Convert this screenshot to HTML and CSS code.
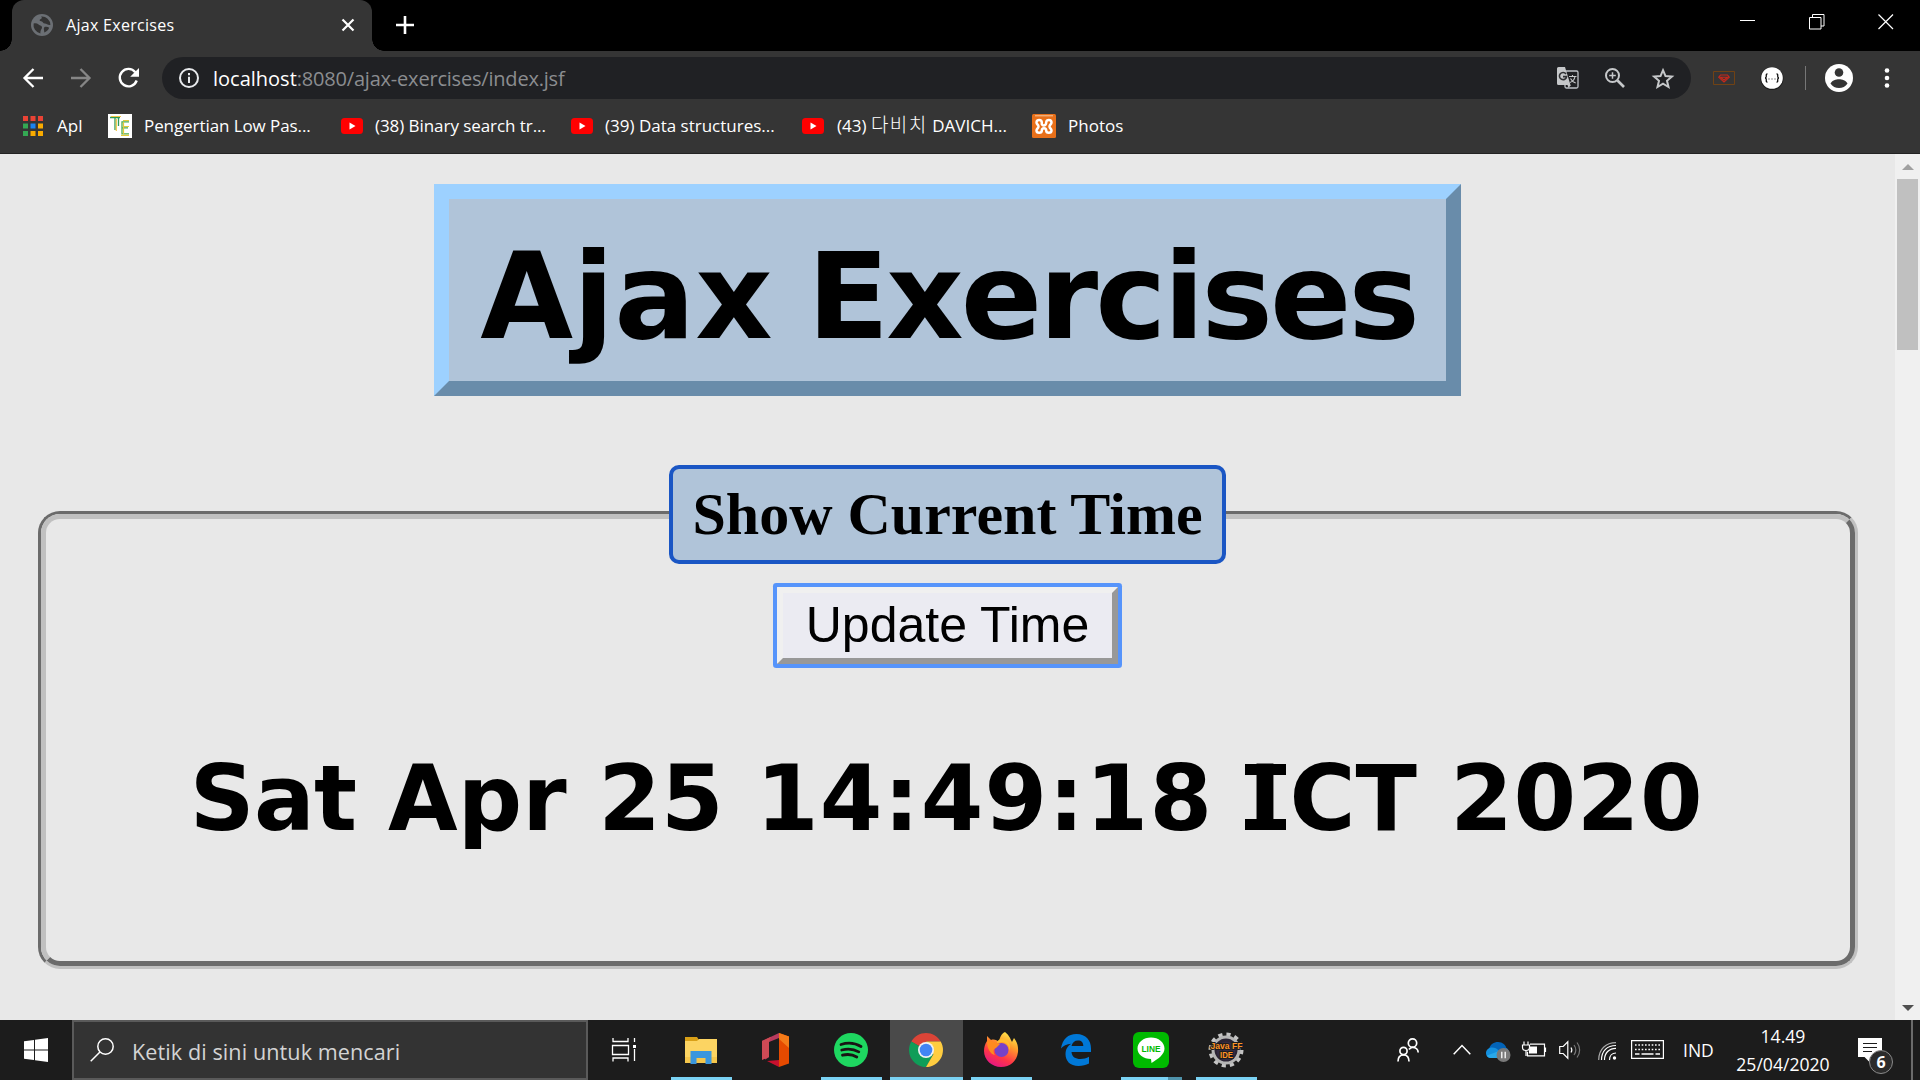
FILE: index.html
```html
<!DOCTYPE html>
<html lang="id">
<head>
<meta charset="utf-8">
<title>Ajax Exercises</title>
<link rel="stylesheet" href="styles.css">
</head>
<body>
<div class="tabstrip">
  <div class="tab">
    <svg class="favicon" viewBox="0 0 22 22"><circle cx="11" cy="11" r="11" fill="#6b6f74"/><path d="M2.600 9.500c2-.5 3.500-.3 5 1 1.500 1.300 3.600 1 3.400 3.200-.2 1.700-1.700 2-1.600 5.700A8.600 8.600 0 0 1 2.600 9.500zM10 2.500c1.500 1 .8 2.200-.6 2.700-1.400.6-.8 2 .8 2.100 2 .2 1.600 2.200 3.600 2.300 2.200.2 2.600 1.700 5.600 1.400A8.500 8.500 0 0 0 10 2.500zM13.500 13c1.600-.6 3.500-.2 4.700.7-1 2.400-2.800 4-5 4.800.4-2-1.300-3.800.3-5.500z" fill="#333"/></svg>
    <span class="tab-title">Ajax Exercises</span>
    <svg class="tab-close" viewBox="0 0 12 12"><path d="M.5.5l11 11M11.500.5l-11 11" stroke="#fff" stroke-width="2.200"/></svg>
  </div>
  <svg class="new-tab" viewBox="0 0 18 18"><path d="M9 0v18M0 9h18" stroke="#fff" stroke-width="2.600"/></svg>
  <div class="win-controls">
    <svg viewBox="0 0 16 16"><path d="M0 6.500h15" stroke="#fff"/></svg>
    <svg viewBox="0 0 16 16"><path d="M.5 3.500h11.500v11.500H.500zM3.500 3.500v-3h11.500v11.500h-3" fill="none" stroke="#fff"/></svg>
    <svg viewBox="0 0 16 16"><path d="M.5.5l14.500 14.500M15 .5L.5 15" stroke="#fff" stroke-width="1.200"/></svg>
  </div>
</div>

<div class="toolbar">
  <svg class="nav back" viewBox="0 0 20 20"><path d="M20 10H2M10.500 1L1.500 10l9 9" fill="none" stroke="#fff" stroke-width="2.300"/></svg>
  <svg class="nav fwd" viewBox="0 0 20 20"><path d="M0 10h18M9.500 1l9 9-9 9" fill="none" stroke="#868686" stroke-width="2.300"/></svg>
  <svg class="nav reload" viewBox="0 0 22 20"><path d="M17.300 4.200A8.700 8.700 0 1 0 18.700 12.500" fill="none" stroke="#fff" stroke-width="2.400"/><path d="M21 0v8.800h-8.800z" fill="#fff"/></svg>
  <div class="omnibox">
    <svg class="info" viewBox="0 0 20 20"><circle cx="10" cy="10" r="9" fill="none" stroke="#e8eaed" stroke-width="2"/><path d="M9 8.800h2V15H9zM9 5h2v2.200H9z" fill="#e8eaed"/></svg>
    <div class="url"><span class="host">localhost</span>:8080/ajax-exercises/index.jsf</div>
    <svg class="translate" viewBox="0 0 22 22"><rect x="8" y="4" width="13" height="17" rx="1.500" fill="none" stroke="#bdc1c6" stroke-width="1.300"/><path d="M1.500 0H8l5.500 18H1.500A1.500 1.500 0 0 1 0 16.500v-15A1.500 1.500 0 0 1 1.500 0z" fill="#c6c8ca"/><path d="M10.500 18H14l-2.500 3z" fill="#c6c8ca"/><path d="M9 7A3.600 3.600 0 1 0 9.600 9.600H6" fill="none" stroke="#303134" stroke-width="1.600"/><path d="M12 9.500h7.500M15.500 8v1.500M18 9.500c-.5 3-2.500 5-5 6M13.500 11.500c1 2 2.800 3.800 5.200 4.600" fill="none" stroke="#c6c8ca" stroke-width="1.100"/></svg>
    <svg class="zoom" viewBox="0 0 20 20"><circle cx="7.500" cy="7.500" r="6.500" fill="none" stroke="#c6c8ca" stroke-width="2"/><path d="M12.500 12.500l6.500 6.500" stroke="#c6c8ca" stroke-width="2.600"/><path d="M7.500 4.200v6.600M4.200 7.500h6.600" stroke="#c6c8ca" stroke-width="1.500"/></svg>
    <svg class="star" viewBox="0 0 22 21"><path d="M11 2.200l2.500 5.900 6.400.5-4.900 4.200 1.500 6.200-5.500-3.300L5.500 19 7 12.800 2.100 8.600l6.400-.5z" fill="none" stroke="#c6c8ca" stroke-width="2"/></svg>
  </div>
  <svg class="ext-mail" viewBox="0 0 22 14"><path d="M.5.5h21v13H.500z" fill="none" stroke="#704214"/><path d="M7.500 4h7l1.800 2.300L11 11 5.700 6.300zM7.500 6.200h7L11 9z" fill="none" stroke="#c5281c" stroke-width="1.100"/></svg>
  <svg class="ext-json" viewBox="0 0 24 24"><circle cx="12" cy="12.500" r="11.500" fill="#1c1c1c"/><circle cx="12" cy="12" r="10.800" fill="#fff"/><path d="M7.500 7.800c-1.600 0-1.200 1.500-1.200 2.500S5.900 12 5 12c.9 0 1.300.700 1.300 1.700s-.4 2.500 1.200 2.500M16.500 7.800c1.600 0 1.200 1.500 1.200 2.500s.4 1.700 1.300 1.700c-.9 0-1.300.700-1.300 1.700s.4 2.500-1.200 2.500" fill="none" stroke="#111" stroke-width="1.300"/><path d="M8.500 13h1M11.500 13h1M14.500 13h1" stroke="#222" stroke-width="1.200"/></svg>
  <div class="tool-sep"></div>
  <svg class="avatar" viewBox="0 0 28 28"><circle cx="14" cy="14" r="14" fill="#fff"/><circle cx="14" cy="8.500" r="4.300" fill="#353535"/><path d="M5.500 19.500C7 16.500 11 15.200 14 15.200s7 1.300 8.500 4.300c-2 3-5 4.500-8.500 4.500s-6.500-1.500-8.500-4.500z" fill="#353535"/></svg>
  <svg class="menu" viewBox="0 0 6 20"><circle cx="3" cy="2.500" r="2.300" fill="#fff"/><circle cx="3" cy="10" r="2.300" fill="#fff"/><circle cx="3" cy="17.500" r="2.300" fill="#fff"/></svg>
</div>

<div class="bookmarks">
  <div class="bm apps"><svg class="i20" viewBox="0 0 20 20"><path d="M0 0h5v5H0zM7.500 0h5v5h-5zM15 0h5v5h-5z" fill="#ea4335"/><path d="M0 7.500h5v5H0zM0 15h5v5H0z" fill="#34a853"/><path d="M7.500 7.500h5v5h-5z" fill="#1a83f0"/><path d="M15 7.500h5v5h-5zM7.500 15h5v5h-5zM15 15h5v5h-5z" fill="#f9ab00"/></svg><span class="t1">Apl</span></div>
  <div class="bm te"><svg class="i24" viewBox="0 0 24 24"><path d="M0 0h24v24H0z" fill="#fff"/><path d="M2 3.500h10M7 3v13M10.500 4v8" fill="none" stroke="#2f9a58" stroke-width="1.300"/><path d="M3 2.500h10M8.300 5v12" fill="none" stroke="#f2c744" stroke-width="1.200"/><path d="M21 7.800h-7v12h7M14 13.800h6" fill="none" stroke="#4bab50" stroke-width="1.300"/><path d="M21 6.500h-6M21 12.500h-5M21 21.300h-8M15.500 8v12" fill="none" stroke="#e3c93a" stroke-width="1.200"/></svg><span class="t2">Pengertian Low Pas...</span></div>
  <div class="bm yt1"><svg class="yt" viewBox="0 0 22 16"><rect width="22" height="16" rx="3.500" fill="#f00"/><path d="M8.500 4.500v7l6-3.500z" fill="#fff"/></svg><span class="t3">(38) Binary search tr...</span></div>
  <div class="bm yt2"><svg class="yt" viewBox="0 0 22 16"><rect width="22" height="16" rx="3.500" fill="#f00"/><path d="M8.500 4.500v7l6-3.500z" fill="#fff"/></svg><span class="t4">(39) Data structures...</span></div>
  <div class="bm yt3"><svg class="yt" viewBox="0 0 22 16"><rect width="22" height="16" rx="3.500" fill="#f00"/><path d="M8.500 4.500v7l6-3.500z" fill="#fff"/></svg><span class="t5">(43) <span class="hangul">다비치</span> DAVICH...</span></div>
  <div class="bm ph"><svg class="i24" viewBox="0 0 24 24"><rect width="24" height="24" rx="1.500" fill="#e8701a"/><path d="M3 1.800h18" stroke="#f7c9a0"/><path d="M9.800 10.500v-2c0-3.500-5.300-3.500-5.300 0 0 2 2 2 2 4s-2 2-2 4c0 3 5.300 3 5.300 0s4.400-3 4.400 0 5.300 3 5.300 0c0-2-2-2-2-4s2-2 2-4c0-3.500-5.300-3.500-5.300 0s-4.400 4-4.400 1" fill="none" stroke="#fff" stroke-width="2.500"/></svg><span class="t6">Photos</span></div>
</div>

<div class="viewport">
  <main class="page">
    <h1 class="title">Ajax <span class="exercises">Exercises</span></h1>
    <section class="frame">
      <div class="frame-inner">
        <h2 class="legend">Show Current Time</h2>
        <button class="update" type="button">Update Time</button>
        <div class="time"><span class="day">Sat</span> <span class="month">Apr</span> <span class="date-num">25</span> <span class="hms">14:49:18</span> <span class="slab">I</span>CT <span class="year">2020</span></div>
      </div>
    </section>
  </main>
  <div class="scrollbar">
    <svg class="up" viewBox="0 0 12 6"><path d="M6 0l6 6H0z" fill="#a0a0a0"/></svg>
    <div class="thumb"></div>
    <svg class="down" viewBox="0 0 12 6"><path d="M6 6l6-6H0z" fill="#505050"/></svg>
  </div>
</div>

<div class="taskbar">
  <div class="start"><svg viewBox="0 0 24 24"><path d="M0 3.300l10-1.400v9.600H0zM11 1.700L24 0v11.500H11zM0 12.500h10v9.600L0 20.700zM11 12.500h13V24l-13-1.700z" fill="#fff"/></svg></div>
  <div class="search"><svg viewBox="0 0 24 24"><circle cx="15.500" cy="8.500" r="7.700" fill="none" stroke="#fff" stroke-width="1.500"/><path d="M10 14L.7 23.300" stroke="#fff" stroke-width="1.500"/></svg><span>Ketik di sini untuk mencari</span></div>
  <div class="view"><svg viewBox="0 0 24 24"><path d="M1 0v3.500h15V0M.5 7.500h16v9H.500zM1 23.500V20h15v3.500M22.500 0v4M22.500 11v12" fill="none" stroke="#fff" stroke-width="1.300"/><path d="M21 7h3v3h-3z" fill="#fff"/></svg></div>
  <div class="apps-row">
    <div class="app run"><svg viewBox="0 0 36 36"><path d="M2 5h12l2 3v5H2z" fill="#d9a017"/><path d="M2 9h12l2-2h18v24H2z" fill="#fcd462"/><path d="M2 25h32v6H2z" fill="#f5c64b"/><path d="M7.500 19h21v13h-6v-6h-9v6h-6z" fill="#3a96dd"/></svg></div>
    <div class="app"><svg viewBox="0 0 36 36"><path d="M4 9L21 1v5l-10 4v15l-3.500 2.500L4 24z" fill="#b83a5e"/><path d="M4 9l9-4.300L11 10v15l-7 3z" fill="#cf4a55"/><path d="M21 1l10 3.500v27L21 35z" fill="#e64a00"/><path d="M21 1l10 3.500V16l-10-9z" fill="#f47a18"/><path d="M9 29l12-1v7z" fill="#c8102e"/></svg></div>
    <div class="app run"><svg viewBox="0 0 36 36"><circle cx="18" cy="18" r="17" fill="#1ed760"/><path d="M8 12.500c7-2.200 14.500-1.300 20 2M8.800 18c6-1.700 12-1 17 1.900M9.500 23.200c5-1.300 10-.8 14.300 1.800" fill="none" stroke="#191414" stroke-width="2.800" stroke-linecap="round"/></svg></div>
    <div class="app run active"><svg viewBox="0 0 36 36"><path d="M18 18L3.300 9.500A17 17 0 0 1 32.700 9.500H18z" fill="#db4437"/><path d="M18 18L3.300 9.500A17 17 0 0 0 18 35l7.400-12.800z" fill="#0f9d58"/><path d="M18 9.500h14.700A17 17 0 0 1 18 35l7.400-12.800z" fill="#ffcd40"/><circle cx="18" cy="18" r="8" fill="#f1f1f1"/><circle cx="18" cy="18" r="6.300" fill="#4285f4"/></svg></div>
    <div class="app run"><svg viewBox="0 0 36 36"><defs><linearGradient id="ff" x1=".8" y1="0" x2=".3" y2="1"><stop offset="0" stop-color="#fff44f"/><stop offset=".35" stop-color="#ff9a2b"/><stop offset=".7" stop-color="#ff3647"/><stop offset="1" stop-color="#e31587"/></linearGradient></defs><path d="M22 0c4 3 5 6 7 10l2-4c3 4 4.500 8 4 14-1 9-8 15-17 15S1 28 1 19c0-4 1-7 3-10V4l4 4c3-1 6 0 8 2 1-5 2-8 6-10z" fill="url(#ff)"/><circle cx="18.500" cy="18" r="7" fill="#7542c9"/><path d="M4 9c3-1 5 0 7 1l6 2-4 4c-3 1-3 4-1 7-5-1-8-7-8-14z" fill="#ff8a1f"/><path d="M19 10c5 0 8 4 7 9 3-6-1-12-7-12-3 0-5 2-5 4z" fill="#ffbd2e"/></svg></div>
    <div class="app"><svg viewBox="0 0 36 36"><path d="M3 16.500C4.500 7 10 2 18.500 2 28 2 33 8.500 33 16.500V20H13.500c.5 5 4 7 9 7 3 0 6-.800 8.500-2.200v6.700C28 33 24.500 34 20.500 34 12 34 7.500 29 7.500 22c0-4.500 2-8.300 6-10.300C8.500 12 5 14 3 16.500zM13.500 14h11.800c0-3.500-1.700-5.500-5.300-5.500-3.400 0-5.700 2-6.500 5.500z" fill="#0078d7"/></svg></div>
    <div class="app run stacked"><svg viewBox="0 0 36 36"><rect width="36" height="36" rx="6" fill="#00b900"/><path d="M18 5.500c7.500 0 13.500 4.800 13.500 11 0 5.500-5.500 10-13 14.500l-.5-4C10.500 27 4.500 22.700 4.500 16.500S10.500 5.500 18 5.500z" fill="#fff"/><text class="line-label" x="18" y="20" text-anchor="middle" textLength="19" lengthAdjust="spacingAndGlyphs">LINE</text></svg></div>
    <div class="app run"><svg viewBox="0 0 36 36"><circle cx="18" cy="18" r="15" fill="none" stroke="#c4c4c4" stroke-width="5" stroke-dasharray="4 3.850"/><circle cx="18" cy="18" r="13" fill="#2a2433" stroke="#b5b5b5" stroke-width="3"/><circle cx="18" cy="19" r="9.500" fill="#332b42"/><text class="gear-label" x="18.500" y="16.500" text-anchor="middle" textLength="32" lengthAdjust="spacingAndGlyphs">Java FF</text><text class="gear-label" x="18.500" y="25.500" text-anchor="middle" textLength="13" lengthAdjust="spacingAndGlyphs">IDE</text></svg></div>
  </div>
  <div class="tray">
    <svg class="people" viewBox="0 0 22 24"><circle cx="15.500" cy="5" r="4.200" fill="none" stroke="#fff" stroke-width="1.700"/><circle cx="6.500" cy="13" r="3.600" fill="none" stroke="#fff" stroke-width="1.700"/><path d="M1 23.500c0-4 2-6.500 5.500-6.500s5.500 2.500 5.500 6.500M12 11.500c1-1.600 2.200-2 3.500-2 3.500 0 5.500 2 5.700 5" fill="none" stroke="#fff" stroke-width="1.700"/></svg>
    <svg class="chev" viewBox="0 0 18 11"><path d="M.7 10.300L9 1.500l8.300 8.800" fill="none" stroke="#fff" stroke-width="1.500"/></svg>
    <svg class="cloud" viewBox="0 0 25 20"><path d="M3 7C4 2.500 8 0 12 0c4.500 0 8 3 8.500 7l-7 4z" fill="#0364b8"/><path d="M0 11c0-3 2.500-5.500 6-5.500 6 0 8 5 12 10.500H5c-3 0-5-2-5-5z" fill="#1490df"/><path d="M12 9l8.500-3c2 1 3 4 2 6z" fill="#1a7cd0"/><path d="M1 13.500l12-4.500 5 7H5c-2 0-3.500-1-4-2.500z" fill="#28a8ea"/><circle cx="17.500" cy="13" r="7" fill="#7a7a7a"/><path d="M15.800 9.800v6.400M19.200 9.800v6.400" stroke="#fff" stroke-width="1.300"/></svg>
    <svg class="batt" viewBox="0 0 24 16"><path d="M8 2.700h14.500v11.600H5.500v-4M23.500 6v4.500M2 0v3M6 0v3M.5 3.500h7V6c0 1.500-1 3-3.500 3S.5 7.500.5 6zM4 9v5.500" fill="none" stroke="#fff" stroke-width="1.200"/><path d="M8 5h7v7H7V9z" fill="#fff"/></svg>
    <svg class="vol" viewBox="0 0 22 18"><path d="M.7 5.500h3.500L8.800.8v16.400l-4.600-4.700H.700z" fill="none" stroke="#fff" stroke-width="1.200"/><path d="M12 6.500c1 1.500 1 3.500 0 5" fill="none" stroke="#fff" stroke-width="1.200"/><path d="M15 4c2.200 3 2.200 7 0 10M18 1.500c3.500 4.500 3.500 10.500 0 15" fill="none" stroke="#777" stroke-width="1.200"/></svg>
    <svg class="wifi" viewBox="0 0 18 18"><circle cx="16.500" cy="16" r="1.700" fill="#fff"/><path d="M11.500 18C11.500 14 14 11 18 11M6.500 18C6.500 11 11 6.300 18 6.300M3.500 18C3.500 9 9 3.500 18 3.500" fill="none" stroke="#fff" stroke-width="1.200"/><path d="M.7 18C.7 7 8 .7 18 .7" fill="none" stroke="#aaa" stroke-width="1.200"/></svg>
    <svg class="kbd" viewBox="0 0 33 19"><path d="M.6.6h31.800v17.800H.600z" fill="none" stroke="#fff" stroke-width="1.200"/><path d="M4 5h25M4 9.500h25" stroke="#fff" stroke-width="1.300" stroke-dasharray="1.600 1.740"/><path d="M4 14h4.500M10.500 14h12M24.500 14H29" stroke="#fff" stroke-width="1.300"/></svg>
    <span class="lang">IND</span>
    <div class="clock"><span class="hm">14.49</span><span class="date">25/04/2020</span></div>
    <div class="notif"><svg viewBox="0 0 24 24"><path d="M0 0h24v19H12l-.5 5L6.500 19H0z" fill="#fff"/><path d="M5 5.500h14M5 9.500h14M5 13.500h9" stroke="#1c1c1c" stroke-width="1.200"/></svg><span class="badge">6</span></div>
    <div class="peek"></div>
  </div>
</div>
</body>
</html>
```
FILE: styles.css
```css
* { box-sizing: border-box; }
html, body { margin: 0; }
body {
  width: 1920px; height: 1080px; overflow: hidden;
  display: flex; flex-direction: column;
  background: #e8e8e8;
  font-family: "Open Sans", "Noto Sans", "Noto Sans CJK KR", sans-serif;
  color: #fff;
}
svg { display: block; flex: none; overflow: visible; }
span { white-space: nowrap; }

.tabstrip { height: 51px; flex: none; display: flex; background: #000; }
.tab { position: relative; width: 360px; margin-left: 12px; background: #353535; border-radius: 12px 12px 0 0; display: flex; align-items: center; padding: 0 0 1px 19px; }
.tab::before, .tab::after { content: ""; position: absolute; bottom: 0; width: 12px; height: 12px; }
.tab::before { left: -12px; background: radial-gradient(circle at 0 0, #000 11.500px, #353535 12px); }
.tab::after { right: -12px; background: radial-gradient(circle at 100% 0, #000 11.500px, #353535 12px); }
.favicon { width: 22px; height: 22px; }
.tab-title { width: 276px; flex: none; margin-left: 13px; font-size: 16px; letter-spacing: .3px; line-height: 24px; }
.tab-close { width: 12px; height: 12px; }
.new-tab { width: 18px; height: 18px; margin: 16px 0 0 24px; }
.win-controls { margin: 14px 26px 0 auto; display: flex; gap: 53px; }
.win-controls svg { width: 16px; height: 16px; }

.toolbar { height: 54px; flex: none; display: flex; align-items: center; background: #353535; }
.nav { height: 20px; }
.back { width: 20px; margin-left: 23px; }
.fwd { width: 20px; margin-left: 28px; }
.reload { width: 22px; margin-left: 27px; }
.omnibox { width: 1529px; height: 42px; margin-left: 22px; border-radius: 21px; background: #202124; display: flex; align-items: center; padding-left: 17px; }
.info { width: 20px; height: 20px; }
.url { width: 1344px; margin-left: 14px; padding-top: 2px; font-size: 20px; line-height: 28px; letter-spacing: -.200px; white-space: nowrap; color: #8b8d90; }
.host { color: #fff; letter-spacing: 0; }
.translate { width: 22px; height: 22px; }
.zoom { width: 20px; height: 20px; margin-left: 26px; }
.star { width: 22px; height: 21px; margin-left: 27px; }
.ext-mail { width: 22px; height: 14px; margin-left: 22px; }
.ext-json { width: 24px; height: 24px; margin-left: 25px; }
.tool-sep { width: 1px; height: 24px; margin-left: 21px; background: #777; }
.avatar { width: 28px; height: 28px; margin-left: 19px; }
.menu { width: 6px; height: 20px; margin-left: 31px; }

.bookmarks { height: 49px; flex: none; display: flex; background: #353535; border-bottom: 1px solid #232323; padding: 5px 0 0 23px; }
.bm { height: 32px; display: flex; align-items: center; font-size: 17px; line-height: 24px; }
.apps { width: 85px; }
.te { width: 233px; letter-spacing: -.080px; }
.yt1 { width: 230px; letter-spacing: -.060px; }
.yt2 { width: 231px; letter-spacing: 0; }
.yt3 { width: 230px; }
.t5 { margin-left: 1px; }
.hangul { font-size: 19px; letter-spacing: 1.500px; line-height: 20px; font-weight: 300; }
.i20 { width: 20px; height: 20px; margin-right: 14px; }
.i24 { width: 24px; height: 24px; margin-right: 12px; }
.yt { width: 22px; height: 16px; margin-right: 12px; }

.viewport { flex: 1; display: flex; min-height: 0; }
.page { width: 1895px; padding-top: 30px; display: flex; flex-direction: column; align-items: center; color: #000; }
.title {
  width: 1027px; height: 212px; margin: 0; padding: 28px 0 0 2px;
  border: 15px solid; border-color: #9dd1ff #698caa #698caa #9dd1ff;
  background: #b0c4d9; text-align: center; white-space: nowrap;
  font: bold 120px/140px "DejaVu Sans", sans-serif; word-spacing: -7px;
}
.exercises { letter-spacing: -3px; }
.frame { width: 1820px; height: 458px; margin: 115px 0 0 1px; border: 3px solid; border-color: #6b6b6b #c0c0c0 #c0c0c0 #6b6b6b; border-radius: 22px; }
.frame-inner { height: 100%; border: 5px solid; border-color: #c0c0c0 #6b6b6b #6b6b6b #c0c0c0; border-radius: 19px; display: flex; flex-direction: column; align-items: center; }
.legend {
  width: 557px; height: 99px; margin: -54px 1px 0 0; padding-top: 11px;
  border: 4px solid #1a56c4; border-radius: 10px; background: #b0c4d9;
  font: bold 60px/69px "Liberation Serif", serif; text-align: center;
}
.update {
  width: 341px; height: 77px; margin: 23px 1px 0 0; padding: 0 0 2px;
  border: 6px solid; border-color: #f0f0f0 #989898 #989898 #f0f0f0;
  box-shadow: 0 0 0 4px #5694fb; border-radius: 1px;
  background: #ebebf2; color: #000;
  font: 50px/58px "Liberation Sans", sans-serif;
}
.time { margin: 82px 3px 0 0; font: bold 90px/105px "DejaVu Sans", sans-serif; white-space: nowrap; }
.day { letter-spacing: -.600px; }
.month { letter-spacing: .2px; }
.date-num { margin-right: 1px; }
.hms { letter-spacing: 1.200px; margin-right: -4px; }
/* slab-serif capital I: the plain stem with a bar at its head and foot */
.slab { position: relative; display: inline-block; width: 49px; text-align: center; }
.slab::before, .slab::after { content: ""; position: absolute; left: 4px; right: 4px; height: 11px; background: #000; }
.slab::before { top: 18px; }
.slab::after { top: 73px; }
.year { letter-spacing: .600px; margin-left: 2px; }

.scrollbar { width: 25px; background: #f0f0f0; display: flex; flex-direction: column; align-items: center; padding: 10px 0 9px; }
.up, .down { width: 12px; height: 6px; }
.thumb { width: 21px; height: 171px; margin-top: 9px; background: #c0c0c0; }
.down { margin-top: auto; }

.taskbar { height: 60px; flex: none; display: flex; background: #1c1c1c; }
.start { width: 72px; padding: 18px 0 0 24px; }
.start svg, .search svg, .view svg, .notif svg { width: 24px; height: 24px; }
.search { width: 516px; border: 2px solid #5a5a5a; background: #333; display: flex; align-items: center; padding-left: 16px; }
.search span { margin: 4px 0 0 18px; font-size: 21.600px; line-height: 30px; letter-spacing: .080px; color: #d4d4d4; }
.view { width: 77px; padding: 18px 0 0 24px; }
.apps-row { display: flex; gap: 2px; }
.app { position: relative; width: 73px; padding: 12px 0 0 18px; }
.app svg { width: 36px; height: 36px; }
.run::after { content: ""; position: absolute; left: 6px; right: 6px; bottom: 0; height: 3px; background: #7ad2f3; }
.active { background: #4a4a4a; }
.active::after { left: 0; right: 0; }
.stacked::after { background: linear-gradient(90deg, #7ad2f3 47px, #4f93ab 47px); }
.line-label { font: bold 9px "Liberation Sans", sans-serif; fill: #00b900; }
.gear-label { font: bold 9px "Liberation Sans", sans-serif; fill: #ff9326; stroke: #1c1c1c; stroke-width: 2px; paint-order: stroke; }
.tray { display: flex; margin-left: auto; }
.people { width: 22px; height: 24px; margin-top: 18px; }
.chev { width: 18px; height: 11px; margin: 24px 0 0 34px; }
.cloud { width: 25px; height: 20px; margin: 22px 0 0 15px; }
.batt { width: 24px; height: 17px; margin: 21px 0 0 11px; }
.vol { width: 22px; height: 18px; margin: 21px 0 0 13px; }
.wifi { width: 18px; height: 18px; margin: 22px 0 0 17px; }
.kbd { width: 33px; height: 19px; margin: 20px 0 0 15px; }
.lang { width: 30px; margin: 17px 0 0 19px; font-size: 17.500px; line-height: 26px; }
.clock { width: 100px; margin: 2px 0 0 20px; display: flex; flex-direction: column; align-items: center; font-size: 17.600px; line-height: 28px; }
.notif { position: relative; width: 24px; margin: 18px 0 0 25px; }
.badge { position: absolute; left: 11px; top: 12px; width: 24px; height: 24px; border: 1px solid #8a8a8a; border-radius: 50%; background: #2b2b2b; font-weight: bold; font-size: 16px; line-height: 22px; text-align: center; }
.peek { width: 2px; margin: 0 7px 0 29px; background: #6b6b6b; }
```
